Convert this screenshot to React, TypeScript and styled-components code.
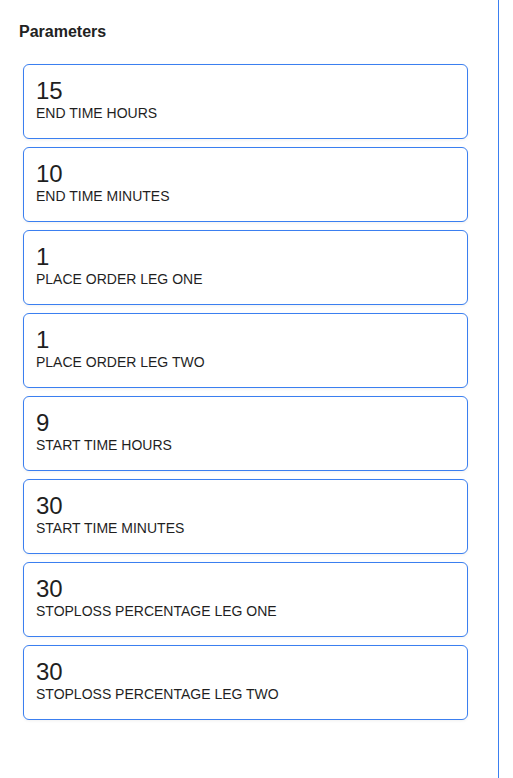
import React from 'react';
import styled, { createGlobalStyle } from 'styled-components';

const params = [
  { value: 15, label: 'END TIME HOURS' },
  { value: 10, label: 'END TIME MINUTES' },
  { value: 1, label: 'PLACE ORDER LEG ONE' },
  { value: 1, label: 'PLACE ORDER LEG TWO' },
  { value: 9, label: 'START TIME HOURS' },
  { value: 30, label: 'START TIME MINUTES' },
  { value: 30, label: 'STOPLOSS PERCENTAGE LEG ONE' },
  { value: 30, label: 'STOPLOSS PERCENTAGE LEG TWO' },
];

const GlobalStyle = createGlobalStyle`
  html, body {
    margin: 0;
    padding: 0;
    background: #ffffff;
    font-family: "Liberation Sans", Arial, sans-serif;
  }
`;

const App = () => {
  return (
    <>
      <GlobalStyle />
      <Panel>
        <Title>Parameters</Title>
        <List>
          {params.map((p) => (
            <Card key={p.label}>
              <Value>{p.value}</Value>
              <Label>{p.label}</Label>
            </Card>
          ))}
        </List>
      </Panel>
    </>
  );
};

export default App;

const Panel = styled('div')`
  width: 498px;
  height: 100vh;
  border-right: 1px solid #3b7ff0;
  box-sizing: content-box;
  overflow: hidden;
`;

const Title = styled('h2')`
  margin: 23px 0 0 19px;
  font-size: 16px;
  line-height: 18px;
  font-weight: bold;
  color: #222222;
`;

const List = styled('div')`
  display: flex;
  flex-direction: column;
  gap: 8px;
  margin: 23px 30px 0 23px;
`;

const Card = styled('div')`
  height: 75px;
  box-sizing: border-box;
  border: 1px solid #3b7ff0;
  border-radius: 6px;
  padding: 12px 12px 0 12px;
  box-shadow: 0 1px 3px rgba(0, 0, 0, 0.06);
  background: #ffffff;
`;

const Value = styled('div')`
  font-size: 24px;
  line-height: 28px;
  color: #1f1f1f;
`;

const Label = styled('div')`
  font-size: 14px;
  line-height: 16px;
  color: #1f1f1f;
`;
